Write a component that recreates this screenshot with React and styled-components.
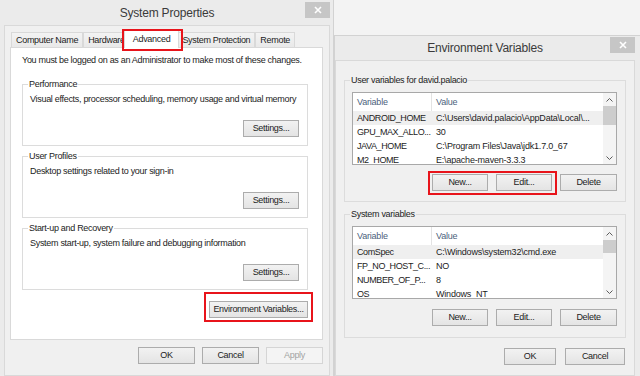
import styled, { createGlobalStyle, css } from 'styled-components'

const userVars = [
  { name: 'ANDROID_HOME', value: 'C:\\Users\\david.palacio\\AppData\\Local\\...', selected: true },
  { name: 'GPU_MAX_ALLO...', value: '30' },
  { name: 'JAVA_HOME', value: 'C:\\Program Files\\Java\\jdk1.7.0_67' },
  { name: 'M2_HOME', value: 'E:\\apache-maven-3.3.3' },
]

const systemVars = [
  { name: 'ComSpec', value: 'C:\\Windows\\system32\\cmd.exe', selected: true },
  { name: 'FP_NO_HOST_C...', value: 'NO' },
  { name: 'NUMBER_OF_P...', value: '8' },
  { name: 'OS', value: 'Windows_NT' },
]

const groups = [
  { title: 'Performance', text: 'Visual effects, processor scheduling, memory usage and virtual memory' },
  { title: 'User Profiles', text: 'Desktop settings related to your sign-in' },
  { title: 'Start-up and Recovery', text: 'System start-up, system failure and debugging information' },
]

export default function App() {
  return (
    <>
      <GlobalStyle />
      <Desktop>
        <Window $x={-1} $y={-1} $w={335} $h={378} $pad="0 3px 0 4px" $z={1}>
          <TitleBar $h={25}>
            <span />
            <span>System Properties</span>
            <CloseButton $top={2}><CloseGlyph /></CloseButton>
          </TitleBar>
          <Client $pad="4px 6px 0 5px">
            <TabStrip>
              <Tab>Computer Name</Tab>
              <Tab>Hardware</Tab>
              <Tab $active $ring="-2px -5px -3px -3px">Advanced</Tab>
              <Tab>System Protection</Tab>
              <Tab>Remote</Tab>
            </TabStrip>
            <TabPanel>
              <Notice>You must be logged on as an Administrator to make most of these changes.</Notice>
              {groups.map((g, idx) => (
                <Group key={idx} $gap={idx === 0 ? 13 : 5}>
                  <Legend>{g.title}</Legend>
                  <GroupText>{g.text}</GroupText>
                  <ButtonRow $top={15}>
                    <Button $w={56}>Settings...</Button>
                  </ButtonRow>
                </Group>
              ))}
              <ButtonRow $top={11}>
                <Marked $ring="-9px -5px -4px -5px">
                  <Button $w={99}>Environment Variables...</Button>
                </Marked>
              </ButtonRow>
            </TabPanel>
            <ButtonRow $top={7} $gap={7}>
              <Button $w={57}>OK</Button>
              <Button $w={57}>Cancel</Button>
              <Button $w={57} disabled>Apply</Button>
            </ButtonRow>
          </Client>
        </Window>

        <Window $x={334} $y={35} $w={307} $h={342} $pad="0 5px 0 0" $z={2}>
          <TitleBar $h={24}>
            <span />
            <span>Environment Variables</span>
            <CloseButton $top={1}><CloseGlyph /></CloseButton>
          </TitleBar>
          <Client $pad="14px 8px 0 8px">
            <Group $gap={0} $padBottom={10}>
              <Legend>User variables for david.palacio</Legend>
              <VarList rows={userVars} thumb={19} />
              <ButtonRow $top={9} $gap={8}>
                <Marked $ring="-3px -5px -4px -4px">
                  <Button $w={56}>New...</Button>
                  <Button $w={56}>Edit...</Button>
                </Marked>
                <Button $w={57}>Delete</Button>
              </ButtonRow>
            </Group>
            <Group $gap={7} $padBottom={11}>
              <Legend>System variables</Legend>
              <VarList rows={systemVars} thumb={13} />
              <ButtonRow $top={10} $gap={8}>
                <Button $w={56}>New...</Button>
                <Button $w={56}>Edit...</Button>
                <Button $w={57}>Delete</Button>
              </ButtonRow>
            </Group>
            <ButtonRow $top={10} $gap={9} $right={1}>
              <Button $w={52}>OK</Button>
              <Button $w={60}>Cancel</Button>
            </ButtonRow>
          </Client>
        </Window>
      </Desktop>
    </>
  )
}

function VarList({ rows, thumb }) {
  return (
    <List>
      <ListBody>
        <ListRow $header>
          <Cell $divider>Variable</Cell>
          <Cell>Value</Cell>
        </ListRow>
        {rows.map((row, idx) => (
          <ListRow key={idx} $selected={row.selected}>
            <Cell $tight>{row.name}</Cell>
            <Cell>{row.value}</Cell>
          </ListRow>
        ))}
      </ListBody>
      <Scrollbar>
        <ScrollArrow><Chevron /></ScrollArrow>
        <Thumb $h={thumb} />
        <Track />
        <ScrollArrow><Chevron down /></ScrollArrow>
      </Scrollbar>
    </List>
  )
}

function Chevron({ down }) {
  return (
    <svg width="7" height="4" viewBox="0 0 7 4">
      <polyline
        points={down ? '0.5,0.5 3.5,3.5 6.5,0.5' : '0.5,3.5 3.5,0.5 6.5,3.5'}
        fill="none"
        stroke="#5c5c5c"
        strokeWidth="1"
      />
    </svg>
  )
}

function CloseGlyph() {
  return (
    <svg width="8" height="8" viewBox="0 0 8 8">
      <path d="M1 1L7 7M7 1L1 7" stroke="#fff" strokeWidth="1.6" />
    </svg>
  )
}

const GlobalStyle = createGlobalStyle`
  * { box-sizing: border-box; }
  html, body { margin: 0; padding: 0; }
  body {
    width: 640px;
    height: 376px;
    overflow: hidden;
    background: #f3f3f3;
    font-family: "Liberation Sans", Arial, sans-serif;
    font-size: 9px;
    line-height: 11px;
    letter-spacing: -0.3px;
    color: #1c1c1c;
  }
`

const ring = css`
  &::after {
    content: "";
    position: absolute;
    inset: ${p => p.$ring};
    border: 2px solid #e8141b;
    pointer-events: none;
  }
`

const Desktop = styled.div`
  position: relative;
  width: 640px;
  height: 376px;
  overflow: hidden;
  background: #f3f3f3;
`

const Window = styled.div`
  position: absolute;
  z-index: ${p => p.$z};
  left: ${p => p.$x}px;
  top: ${p => p.$y}px;
  width: ${p => p.$w}px;
  height: ${p => p.$h}px;
  display: flex;
  flex-direction: column;
  padding: ${p => p.$pad};
  background: #ebebeb;
  border: 1px solid #d2d2d2;
`

const TitleBar = styled.div`
  flex-shrink: 0;
  height: ${p => p.$h}px;
  display: grid;
  grid-template-columns: 1fr auto 1fr;
  align-items: center;
  font-size: 12px;
  line-height: 14px;
  letter-spacing: -0.2px;
  color: #3a3a3a;
`

const CloseButton = styled.div`
  justify-self: end;
  align-self: start;
  margin-top: ${p => p.$top}px;
  width: 25px;
  height: 16px;
  background: #c6c6c6;
  display: flex;
  align-items: center;
  justify-content: center;
`

const Client = styled.div`
  flex: 1;
  display: flex;
  flex-direction: column;
  padding: ${p => p.$pad};
  background: #f0f0f0;
  border: 1px solid #d9d9d9;
`

const TabStrip = styled.div`
  display: flex;
  align-items: flex-end;
  height: 17px;
  padding-left: 1px;
`

const Tab = styled.div`
  position: relative;
  z-index: ${p => (p.$active ? 3 : 1)};
  height: ${p => (p.$active ? 18 : 15)}px;
  margin: ${p => (p.$active ? '0 -2px -1px -6px' : '0')};
  padding: 0 ${p => (p.$active ? 8 : 4)}px;
  display: flex;
  align-items: center;
  white-space: nowrap;
  border: 1px solid #d9d9d9;
  border-bottom: none;
  background: ${p => (p.$active ? '#fff' : 'linear-gradient(#f3f3f3, #e9e9e9)')};
  ${p => p.$ring && ring}
`

const TabPanel = styled.div`
  position: relative;
  z-index: 2;
  height: 293px;
  display: flex;
  flex-direction: column;
  padding: 7px 14px 0 11px;
  background: #fff;
  border: 1px solid #d9d9d9;
`

const Notice = styled.div`
  white-space: nowrap;
`

const Group = styled.fieldset`
  margin: ${p => p.$gap}px 0 0;
  min-width: 0;
  display: flex;
  flex-direction: column;
  padding: 0 8px ${p => p.$padBottom ?? 8}px 7px;
  border: 1px solid #dcdcdc;
`

const Legend = styled.legend`
  margin-left: -2px;
  padding: 0 1px;
  line-height: 11px;
`

const GroupText = styled.div`
  margin-top: 4px;
  white-space: nowrap;
`

const ButtonRow = styled.div`
  display: flex;
  justify-content: flex-end;
  gap: ${p => p.$gap ?? 0}px;
  margin-top: ${p => p.$top}px;
  padding-right: ${p => p.$right ?? 0}px;
`

const Marked = styled.div`
  position: relative;
  display: flex;
  gap: 8px;
  ${ring}
`

const Button = styled.button`
  width: ${p => p.$w}px;
  height: 17px;
  padding: 0;
  font: inherit;
  letter-spacing: inherit;
  color: #1c1c1c;
  background: linear-gradient(#f2f2f2, #e4e4e4);
  border: 1px solid #acacac;
  border-radius: 0;

  &:disabled {
    color: #a3a3a3;
    background: #f4f4f4;
    border-color: #d5d5d5;
  }
`

const List = styled.div`
  height: 73px;
  margin-top: 6px;
  display: flex;
  overflow: hidden;
  background: #fff;
  border: 1px solid #a8a8a8;
`

const ListBody = styled.div`
  flex: 1;
  min-width: 0;
  display: flex;
  flex-direction: column;
`

const ListRow = styled.div`
  flex-shrink: 0;
  display: grid;
  grid-template-columns: 79px 1fr;
  height: ${p => (p.$header ? 18 : 14)}px;
  color: ${p => (p.$header ? '#4c5f7c' : '#1c1c1c')};
  background: ${p => (p.$selected ? '#efefef' : 'transparent')};
`

const Cell = styled.div`
  display: flex;
  align-items: center;
  padding-left: 4px;
  white-space: nowrap;
  overflow: hidden;
  letter-spacing: ${p => (p.$tight ? '-0.4px' : '-0.2px')};
  border-right: ${p => (p.$divider ? '1px solid #e3e3e3' : 'none')};
`

const Scrollbar = styled.div`
  width: 13px;
  flex-shrink: 0;
  display: flex;
  flex-direction: column;
  background: #f4f4f4;
`

const ScrollArrow = styled.div`
  height: 13px;
  display: flex;
  align-items: center;
  justify-content: center;
`

const Thumb = styled.div`
  height: ${p => p.$h}px;
  background: #cdcdcd;
`

const Track = styled.div`
  flex: 1;
`
